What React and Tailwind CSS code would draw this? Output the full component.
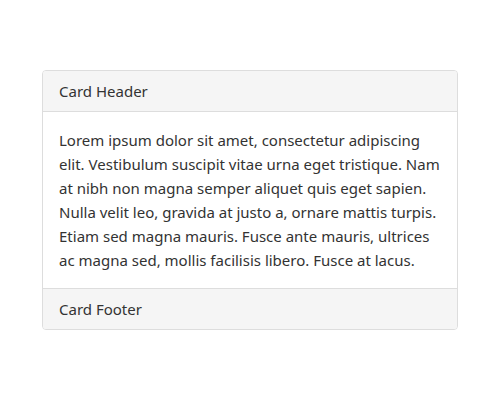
const App = () => {
  return (
    <div className="w-[500px] h-[400px] bg-white pt-[70px] font-['Segoe_UI','Noto_Sans',sans-serif] text-[#333]">
      <div className="mx-auto w-[416px] rounded-[4px] border border-[#ddd] overflow-hidden">
        <div className="bg-[#f5f5f5] border-b border-[#ddd] px-4 h-[41px] flex items-center text-[15px]">
          Card Header
        </div>
        <div className="px-4 py-4 text-[15px] leading-6">
          Lorem ipsum dolor sit amet, consectetur adipiscing
          <br />
          elit. Vestibulum suscipit vitae urna eget tristique. Nam
          <br />
          at nibh non magna semper aliquet quis eget sapien.
          <br />
          Nulla velit leo, gravida at justo a, ornare mattis turpis.
          <br />
          Etiam sed magna mauris. Fusce ante mauris, ultrices
          <br />
          ac magna sed, mollis facilisis libero. Fusce at lacus.
        </div>
        <div className="bg-[#f5f5f5] border-t border-[#ddd] px-4 h-[41px] flex items-center text-[15px]">
          Card Footer
        </div>
      </div>
    </div>
  );
};

export default App;
